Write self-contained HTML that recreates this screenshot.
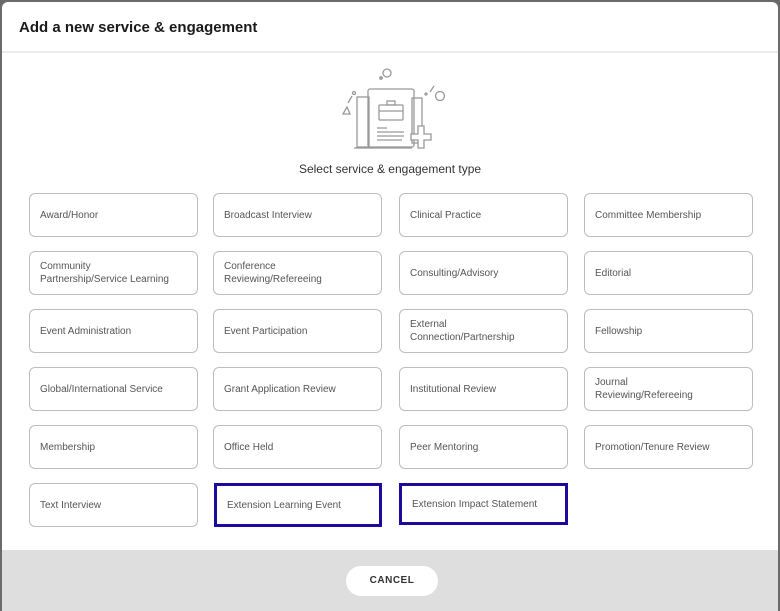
<!DOCTYPE html>
<html><head><style>
body{margin:0;width:780px;height:611px;background:#6b6b6b;font-family:"Liberation Sans",sans-serif;overflow:hidden;position:relative}
.modal{position:absolute;left:2px;top:2px;width:776px;height:609px;background:#fff;border-radius:6px 6px 0 0;overflow:hidden}
.hdr{position:absolute;left:0;top:0;width:776px;height:49px;border-bottom:2px solid #ececec}
.hdr h1{margin:0;position:absolute;left:17px;top:17px;font-size:15px;font-weight:bold;color:#1a1a1a}
.sub{position:absolute;left:0;width:776px;top:160px;text-align:center;font-size:12px;color:#333}
.b{position:absolute;height:42px;border:1px solid #bdbdbd;border-radius:6px;box-sizing:content-box;font-size:10px;color:#555;display:flex;align-items:center;padding:0 0 0 10px;width:157px;line-height:13px}
.sel{border:3px solid #1c0a9c;border-radius:0}
.ftr{position:absolute;left:0;top:548px;width:776px;height:61px;background:#dedede}
.cancel{position:absolute;left:344px;top:16px;width:92px;height:30px;background:#fff;border-radius:15px;text-align:center;line-height:30px;font-size:10px;font-weight:bold;color:#333;letter-spacing:.5px}
</style></head><body>
<div class="modal">
<div class="hdr"><h1>Add a new service &amp; engagement</h1></div>
<svg style="position:absolute;left:330px;top:55px" width="130" height="100" viewBox="330 55 130 100" fill="none" stroke="#999" stroke-width="1.3">
<circle cx="385" cy="71" r="4"/><circle cx="379" cy="76" r="1.2" fill="#999"/>
<circle cx="438" cy="94" r="4.5"/><line x1="432" y1="84" x2="428" y2="90"/><circle cx="424" cy="92" r="1"/>
<polygon points="341,112 345,105 348,112"/><line x1="346" y1="101" x2="350" y2="94"/><circle cx="352" cy="91" r="1.5"/>
<rect x="355" y="95" width="12" height="50"/><rect x="410" y="96" width="10" height="45"/>
<rect x="366" y="87" width="46" height="58" rx="2"/>
<rect x="377" y="103" width="24" height="15" rx="1"/><rect x="385" y="99" width="8" height="4"/><line x1="377" y1="109" x2="401" y2="109"/>
<line x1="375" y1="126" x2="385" y2="126"/><line x1="375" y1="130" x2="402" y2="130"/><line x1="375" y1="134" x2="402" y2="134"/><line x1="375" y1="138" x2="400" y2="138"/>
<path d="M409 132h7v-8h6v8h7v6h-7v8h-6v-8h-7z" fill="#fff"/>
<line x1="352" y1="146" x2="410" y2="146"/>
</svg>
<div class="sub">Select service &amp; engagement type</div>
<div style="position:absolute;left:-2px;top:-2px">
<div class="b" style="left:29px;top:193px">Award/Honor</div>
<div class="b" style="left:213px;top:193px">Broadcast Interview</div>
<div class="b" style="left:399px;top:193px">Clinical Practice</div>
<div class="b" style="left:584px;top:193px">Committee Membership</div>
<div class="b" style="left:29px;top:251px">Community<br>Partnership/Service Learning</div>
<div class="b" style="left:213px;top:251px">Conference<br>Reviewing/Refereeing</div>
<div class="b" style="left:399px;top:251px">Consulting/Advisory</div>
<div class="b" style="left:584px;top:251px">Editorial</div>
<div class="b" style="left:29px;top:309px">Event Administration</div>
<div class="b" style="left:213px;top:309px">Event Participation</div>
<div class="b" style="left:399px;top:309px">External<br>Connection/Partnership</div>
<div class="b" style="left:584px;top:309px">Fellowship</div>
<div class="b" style="left:29px;top:367px">Global/International Service</div>
<div class="b" style="left:213px;top:367px">Grant Application Review</div>
<div class="b" style="left:399px;top:367px">Institutional Review</div>
<div class="b" style="left:584px;top:367px">Journal<br>Reviewing/Refereeing</div>
<div class="b" style="left:29px;top:425px">Membership</div>
<div class="b" style="left:213px;top:425px">Office Held</div>
<div class="b" style="left:399px;top:425px">Peer Mentoring</div>
<div class="b" style="left:584px;top:425px">Promotion/Tenure Review</div>
<div class="b" style="left:29px;top:483px">Text Interview</div>
<div class="b sel" style="left:214px;top:483px;width:152px;height:38px">Extension Learning Event</div>
<div class="b sel" style="left:399px;top:483px;width:153px;height:36px">Extension Impact Statement</div>
</div>
<div class="ftr"><div class="cancel">CANCEL</div></div>
</div>
</body></html>
